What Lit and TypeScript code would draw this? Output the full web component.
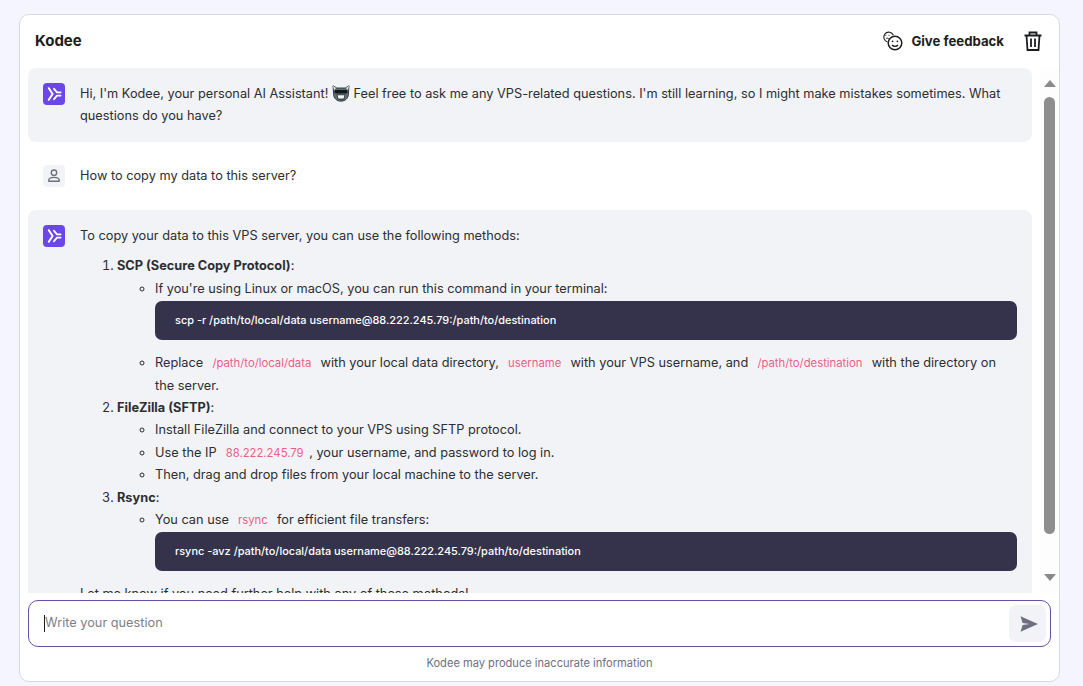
import { LitElement, html, css } from "lit";
import { customElement } from "lit/decorators.js";

const kodeeIcon = html`<span class="avatar kodee"><svg width="22" height="22" viewBox="0 0 22 22" fill="none" stroke="#fff" stroke-width="2" stroke-linejoin="round" stroke-linecap="round"><path d="M5.8 5.2 9.6 11 5.8 16.8"/><path d="M11 5.800 14 9.400H17.600M11 16.200 14 12.600H17.600" stroke-width="1.8"/></svg></span>`;
const userIcon = html`<span class="avatar user"><svg width="22" height="22" viewBox="0 0 22 22" fill="none" stroke="#6d7081" stroke-width="1.4"><circle cx="11" cy="7.7" r="2.7"/><path d="M5.8 16.2v-.9c0-1.8 2.6-2.9 5.2-2.9s5.2 1.1 5.2 2.9v.9z" stroke-linejoin="round"/></svg></span>`;
const emoji = html`<svg class="emoji" width="18" height="17" viewBox="0 0 18 17"><path d="M1 .8 L4.8 3 H13.2 L17 .8 L16.4 9 C16.4 13.5 13 16.2 9 16.2 C5 16.2 1.6 13.5 1.6 9Z" fill="#5f7278" stroke="#2a3136" stroke-width=".9"/><path d="M1 .8 L4 3 L2 5Z M17 .8 L14 3 L16 5Z" fill="#e8e8e8"/><rect x="2.6" y="5" width="12.8" height="3.4" rx="1.2" fill="#14181b"/><path d="M5 9.800H13L12 14H6Z" fill="#f4f4f4" stroke="#222" stroke-width=".8"/></svg>`;

@customElement("app-root")
export class AppRoot extends LitElement {
  static styles = css`
    :host { display: block; height: 686px; box-sizing: border-box; background: #f4f5ff; padding: 14px 23px 4px 19px; font-family: "Inter", "Liberation Sans", sans-serif; font-size: 12.75px; color: #2f1c6a; overflow: hidden; }
    * { box-sizing: border-box; }
    .card { height: 668px; background: #fff; border: 1px solid #d8dae0; border-radius: 10px; display: flex; flex-direction: column; padding: 0 0 0 8px; overflow: hidden; }
    .head { height: 51px; margin-bottom: 2px; flex: none; display: flex; align-items: center; padding: 0 17px 0 7px; color: #1d1e20; }
    .title { font-size: 15px; font-weight: 700; flex: 1; }
    .fb { display: flex; align-items: center; gap: 8px; font-size: 13.2px; font-weight: 700; margin-right: 20px; }
    .fb svg, .head > svg { display: block; }
    .body { height: 525px; flex: none; display: flex; gap: 8px; }
    .msgs { width: 1004px; flex: none; overflow: hidden; color: #2d2e33; line-height: 22.4px; }
    .msg { display: flex; gap: 15px; padding: 15px; border-radius: 8px; margin-bottom: 13px; }
    .msg.first { height: 74px; margin-bottom: 13px; }
    .msg.grey { background: #f2f3f6; }
    .msg.u { padding: 10px 15px; align-items: center; height: 42px; }
    .avatar { width: 22px; height: 22px; border-radius: 4px; flex: none; display: block; }
    .avatar svg { display: block; }
    .kodee { background: #6c47e8; }
    .user { background: #f2f3f6; }
    .text { flex: 1; min-width: 0; }
    .emoji { vertical-align: -4px; margin-top: -4px; }
    p { margin: 0; }
    ol { margin: 8px 0 0; padding: 0 0 0 37px; }
    ul { margin: 0; padding: 0 0 0 38px; list-style: circle; }
    .pre { background: #35334b; color: #fff; font-size: 10.95px; font-weight: 500; height: 39px; line-height: 38px; border-radius: 7px; padding: 0 20px; margin: .6px 0 12.4px; }
    code { font-family: inherit; color: #eb5f86; font-size: 11.3px; line-height: 1; padding: 0 5.6px; }
    .bar { width: 19px; flex: none; display: flex; flex-direction: column; align-items: center; padding-top: 12px; background: #fdfdfd; }
    .up { border: 6.5px solid transparent; border-top: 0; border-bottom: 7px solid #8a8a8a; width: 0; height: 0; }
    .thumb { width: 11px; height: 437px; background: #8e8e8e; border-radius: 6px; margin-top: 10px; }
    .down { border: 6.5px solid transparent; border-bottom: 0; border-top: 7px solid #8a8a8a; width: 0; height: 0; margin-top: 40px; }
    .input { margin-top: 7px; flex: none; height: 47px; width: 1023px; border: 1px solid #6a4fa8; border-radius: 10px; display: flex; align-items: center; padding: 0 4px 0 15px; color: #7f8087; }
    .caret { width: 1px; height: 17px; background: #1d1e20; }
    .ph { flex: 1; margin-top: -2px; }
    .send { width: 37px; height: 37px; background: #f2f3f6; border-radius: 7px; display: flex; align-items: center; justify-content: center; padding-left: 2px; }
    .foot { text-align: center; font-size: 11.1px; color: #6d7081; margin-top: 9px; width: 1023px; }
  `;
  render() {
    return html`<div class="card">
      <div class="head">
        <div class="title">Kodee</div>
        <div class="fb">
          <svg width="21" height="21" viewBox="0 0 21 21" fill="none" stroke="#1d1e20" stroke-width="1.1"><path d="M5.6 12A5 5 0 1 1 11.4 5.3"/><circle cx="13" cy="13" r="6.8" stroke-width="1.5"/><circle cx="10.6" cy="11.3" r=".9" fill="#1d1e20" stroke="none"/><circle cx="15.4" cy="11.3" r=".9" fill="#1d1e20" stroke="none"/><path d="M10 15c1.6 1.8 4.4 1.8 6 0" stroke-width="1.3"/><path d="M3.4 5.4h.9M6.6 5.4h.9M3.8 8.8c.8-.9 2.200-.9 3 0" stroke-width="1"/></svg>
          <span>Give feedback</span>
        </div>
        <svg width="18" height="20" viewBox="0 0 18 20" fill="none" stroke="#1d1e20" stroke-width="1.8"><path d="M.5 4.500h17M5.500 4.500V1.500h7V4.500M2.500 4.500l1 14.500h11l1-14.500M7 7.500v8.500M11 7.500v8.500"/></svg>
      </div>
      <div class="body">
        <div class="msgs">
          <div class="msg grey first">${kodeeIcon}<div class="text">Hi, I'm Kodee, your personal AI Assistant! ${emoji} Feel free to ask me any VPS-related questions. I'm still learning, so I might make mistakes sometimes. What questions do you have?</div></div>
          <div class="msg u">${userIcon}<div class="text">How to copy my data to this server?</div></div>
          <div class="msg grey">${kodeeIcon}<div class="text">
            <p>To copy your data to this VPS server, you can use the following methods:</p>
            <ol>
              <li><b>SCP (Secure Copy Protocol)</b>:
                <ul>
                  <li>If you're using Linux or macOS, you can run this command in your terminal:
                    <div class="pre">scp -r /path/to/local/data username@88.222.245.79:/path/to/destination</div></li>
                  <li>Replace <code>/path/to/local/data</code> with your local data directory, <code>username</code> with your VPS username, and <code>/path/to/destination</code> with the directory on the server.</li>
                </ul></li>
              <li><b>FileZilla (SFTP)</b>:
                <ul>
                  <li>Install FileZilla and connect to your VPS using SFTP protocol.</li>
                  <li>Use the IP <code>88.222.245.79</code>, your username, and password to log in.</li>
                  <li>Then, drag and drop files from your local machine to the server.</li>
                </ul></li>
              <li><b>Rsync</b>:
                <ul>
                  <li>You can use <code>rsync</code> for efficient file transfers:
                    <div class="pre">rsync -avz /path/to/local/data username@88.222.245.79:/path/to/destination</div></li>
                </ul></li>
            </ol>
            <p>Let me know if you need further help with any of these methods!</p>
          </div></div>
        </div>
        <div class="bar"><div class="up"></div><div class="thumb"></div><div class="down"></div></div>
      </div>
      <div class="input"><span class="caret"></span><span class="ph">Write your question</span>
        <div class="send"><svg width="18" height="16" viewBox="0 0 18 16"><path d="M.5.3 L18 8 L.5 15.700 L2.600 9 L9.500 8 L2.600 7 Z" fill="#6d7081"/></svg></div>
      </div>
      <div class="foot">Kodee may produce inaccurate information</div>
    </div>`;
  }
}
